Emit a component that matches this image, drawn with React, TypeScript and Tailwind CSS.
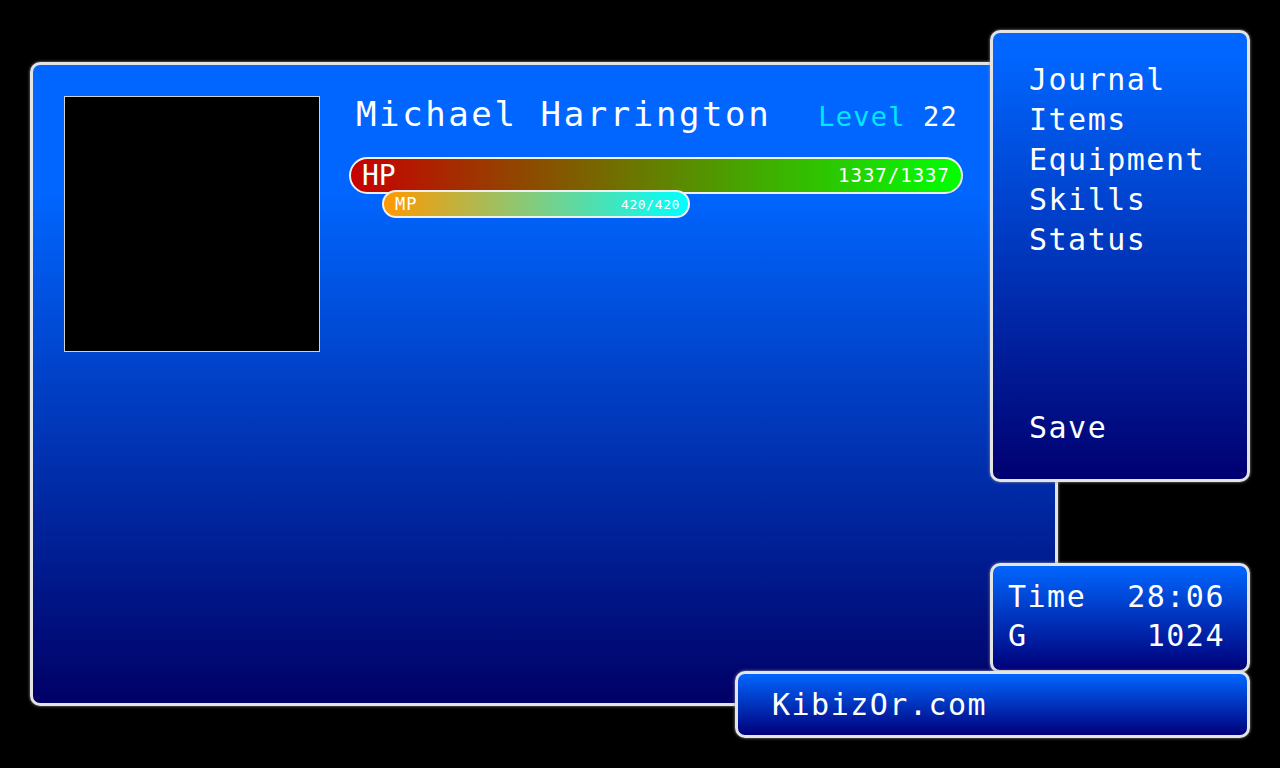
const menuItems = ["Journal", "Items", "Equipment", "Skills", "Status"];

const frame =
  "absolute border-[3px] border-[#e4e4e4] rounded-[10px] shadow-[0_0_3px_#9a9a9a] text-white";

const App = () => {
  return (
    <div className="relative w-[1280px] h-[768px] bg-black overflow-hidden font-['DejaVu_Sans_Mono','Liberation_Mono',monospace]">
      {/* main status window */}
      <div
        className={`${frame} left-[30px] top-[62px] w-[1028px] h-[644px] bg-linear-to-b/srgb from-[#0066ff] from-20% to-[#000066] flex gap-[29px] p-[31px]`}
      >
        <div className="w-[256px] h-[256px] shrink-0 bg-black border border-[#d0d0d0]" />
        <div className="w-[614px] flex flex-col">
          <div className="flex items-baseline justify-between pl-[7px] pr-[5px]">
            <span className="text-[34px] leading-[36px] tracking-[2.6px]">
              Michael Harrington
            </span>
            <span className="text-[27px] leading-[36px] tracking-[1.2px]">
              <span className="text-[#00e8ff]">Level</span> 22
            </span>
          </div>
          <div className="mt-[22px] h-[37px] rounded-full border-2 border-[#f0f0f0] bg-linear-to-r/srgb from-[#c80000] to-[#00ff00] flex items-center justify-between pl-[11px] pr-[11px]">
            <span className="text-[28px] leading-none">HP</span>
            <span className="text-[19px] leading-none tracking-[1px]">1337/1337</span>
          </div>
          <div className="relative mt-[-4px] ml-[33px] w-[308px] h-[28px] rounded-full border-2 border-[#f0f0f0] bg-linear-to-r/srgb from-[#ff9900] to-[#00ffff] flex items-center justify-between pl-[11px] pr-[8px]">
            <span className="text-[17px] leading-none tracking-[1px]">MP</span>
            <span className="text-[13px] leading-none tracking-[0.6px]">420/420</span>
          </div>
        </div>
      </div>

      {/* command menu */}
      <div
        className={`${frame} left-[990px] top-[30px] w-[260px] h-[452px] bg-linear-to-b/srgb from-[#0066ff] from-5% to-[#000070] flex flex-col pl-[36px] pt-[27px] pb-[31px]`}
      >
        {menuItems.map((item) => (
          <div key={item} className="text-[30px] leading-[40px] tracking-[1.5px]">
            {item}
          </div>
        ))}
        <div className="mt-auto text-[30px] leading-[40px] tracking-[1.5px]">Save</div>
      </div>

      {/* time / gold */}
      <div
        className={`${frame} left-[990px] top-[563px] w-[260px] h-[110px] bg-linear-to-b/srgb from-[#0066ff] to-[#00007a] pl-[15px] pr-[22px] pt-[11px] text-[30px] leading-[39px] tracking-[1.5px]`}
      >
        <div className="flex justify-between">
          <span>Time</span>
          <span>28:06</span>
        </div>
        <div className="flex justify-between">
          <span>G</span>
          <span>1024</span>
        </div>
      </div>

      {/* location */}
      <div
        className={`${frame} left-[735px] top-[671px] w-[515px] h-[67px] bg-linear-to-b/srgb from-[#0066ff] to-[#00007a] flex items-center pl-[34px] text-[30px] tracking-[1.5px]`}
      >
        KibizOr.com
      </div>
    </div>
  );
};

export default App;
